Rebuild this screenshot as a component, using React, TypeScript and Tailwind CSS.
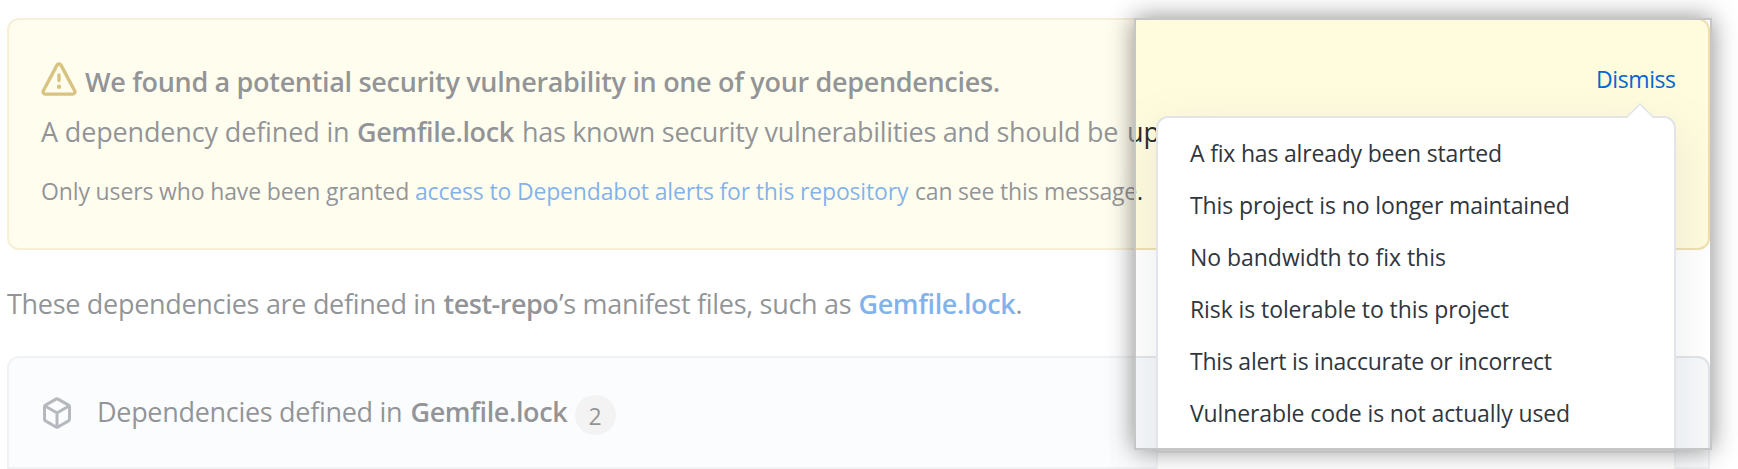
import type { ReactNode } from "react";

function AlertIcon() {
  return (
    <svg viewBox="0 0 16 16" className="h-9 w-9 fill-[#b08800]" aria-hidden="true">
      <path
        fillRule="evenodd"
        d="M8.22 1.754a.25.25 0 00-.44 0L1.698 13.132a.25.25 0 00.22.368h12.164a.25.25 0 00.22-.368L8.22 1.754zm-1.763-.707c.659-1.234 2.427-1.234 3.086 0l6.082 11.378A1.75 1.75 0 0114.082 15H1.918a1.75 1.75 0 01-1.543-2.575L6.457 1.047zM9 11a1 1 0 11-2 0 1 1 0 012 0zm-.25-5.25a.75.75 0 00-1.5 0v2.5a.75.75 0 001.5 0v-2.5z"
      />
    </svg>
  );
}

function PackageIcon() {
  return (
    <svg viewBox="0 0 16 16" className="h-8 w-8 fill-[#6a737d]" aria-hidden="true">
      <path
        fillRule="evenodd"
        d="M8.878.392a1.75 1.75 0 00-1.756 0l-5.25 3.045A1.75 1.75 0 001 4.951v6.098c0 .624.332 1.2.872 1.514l5.25 3.045a1.75 1.75 0 001.756 0l5.25-3.045c.54-.313.872-.89.872-1.514V4.951c0-.624-.332-1.2-.872-1.514L8.878.392zM7.875 1.69a.25.25 0 01.25 0l4.63 2.685L8 7.133 3.245 4.375l4.63-2.685zM2.5 5.677v5.372c0 .09.047.171.125.216l4.625 2.683V8.432L2.5 5.677zm6.25 8.271l4.625-2.683a.25.25 0 00.125-.216V5.677L8.75 8.432v5.516z"
      />
    </svg>
  );
}

function Line({ className, children }: { className: string; children: ReactNode }) {
  return <p className={`flex h-10 items-baseline whitespace-pre leading-10 ${className}`}>{children}</p>;
}

const reasons = [
  { label: "A fix has already been started", spacing: "tracking-[-0.19px]" },
  { label: "This project is no longer maintained", spacing: "tracking-[-0.11px]" },
  { label: "No bandwidth to fix this", spacing: "tracking-[-0.04px]" },
  { label: "Risk is tolerable to this project", spacing: "tracking-[-0.09px]" },
  { label: "This alert is inaccurate or incorrect", spacing: "tracking-[-0.23px]" },
  { label: "Vulnerable code is not actually used", spacing: "tracking-[-0.12px]" },
];

function DismissMenu() {
  return (
    <div className="absolute left-[1156px] top-[116px] h-[380px] w-[520px] rounded-xl border-2 border-[#e1e4e8] bg-white shadow-[0_16px_48px_rgba(149,157,165,0.2)]">
      <svg viewBox="0 0 32 18" className="absolute right-[18px] top-[-16px] h-[18px] w-8" aria-hidden="true">
        <path d="M2 16 16 2 30 16V18H2Z" fill="#fff" />
        <path d="M2 16 16 2 30 16" fill="none" stroke="#e1e4e8" strokeWidth="1.6" />
      </svg>
      <ul className="flex flex-col border-b-2 border-[#dfe2e6] pb-3 pt-[9px] text-[23px] text-[#2f363d]">
        {reasons.map((r) => (
          <li key={r.label} className={`flex h-[52px] items-center whitespace-nowrap pl-8 leading-[52px] ${r.spacing}`}>
            {r.label}
          </li>
        ))}
      </ul>
    </div>
  );
}

export default function App() {
  return (
    <main className="relative h-[469px] w-[1738px] overflow-hidden bg-white pl-[7px] pt-[18px] font-['Open_Sans','Noto_Sans',sans-serif] text-[27px] text-[#24292e]">
      <section className="flex h-[232px] w-[1703px] justify-between rounded-xl border-2 border-[#eedfae] bg-[#fffbdd] pl-8 pr-8 pt-[42px]">
        <div>
          <div className="flex">
            <div className="h-10 w-11">
              <AlertIcon />
            </div>
            <Line className="font-semibold tracking-[-0.32px]">
              We found a potential security vulnerability in one of your dependencies.
            </Line>
          </div>
          <Line className="mt-[10px]">
            <span className="w-[316px] tracking-[-0.15px]">A dependency defined in</span>
            <strong className="w-[165px] font-semibold tracking-[-0.4px]">Gemfile.lock</strong>
            <span className="w-[605px] tracking-[-0.31px]">has known security vulnerabilities and should be</span>
            <span>up</span>
          </Line>
          <Line className="mt-[19px] text-[23px]">
            <span className="w-[374px] tracking-[-0.14px]">Only users who have been granted</span>
            <a className="w-[500px] tracking-[-0.17px] text-[#0366d6]">access to Dependabot alerts for this repository</a>
            <span className="tracking-[-0.2px]">can see this message.</span>
          </Line>
        </div>
        <a className="h-10 w-[80px] text-[23px] leading-[35px] tracking-[-0.4px] text-[#0366d6]">Dismiss</a>
      </section>

      <Line className="mt-[34px]">
        <span className="w-[436.5px] tracking-[-0.3px]">These dependencies are defined in</span>
        <strong className="w-[115.5px] font-semibold tracking-[-0.5px]">test-repo</strong>
        <span className="w-[299.5px] tracking-[-0.3px]">’s manifest files, such as</span>
        <strong className="w-[157px] font-semibold tracking-[-0.4px] text-[#0366d6]">Gemfile.lock</strong>
        <span>.</span>
      </Line>

      <section className="mt-8 flex h-[113px] w-[1703px] items-start rounded-t-xl border-2 border-[#e1e4e8] bg-[#f6f8fa] pl-8 pt-[34px]">
        <div className="mt-[5px] w-[56px]"><PackageIcon /></div>
        <Line className="">
          <span className="w-[313.5px] tracking-[-0.3px]">Dependencies defined in</span>
          <strong className="w-[164px] font-semibold tracking-[-0.4px]">Gemfile.lock</strong>
        </Line>
        <span className="mt-[3px] flex h-10 w-[41px] items-center justify-center rounded-[20px] bg-[#e6e7e9] pt-[2px] text-[23px] font-medium leading-10">
          2
        </span>
      </section>

      <DismissMenu />

      <div
        className="absolute left-[1134px] top-[18px] h-[432px] w-[578px] border-2 border-[#c6c6c6] shadow-[0_0_24px_rgba(0,0,0,0.45),0_0_0_1800px_rgba(255,255,255,0.5)]"
        aria-hidden="true"
      />
    </main>
  );
}
